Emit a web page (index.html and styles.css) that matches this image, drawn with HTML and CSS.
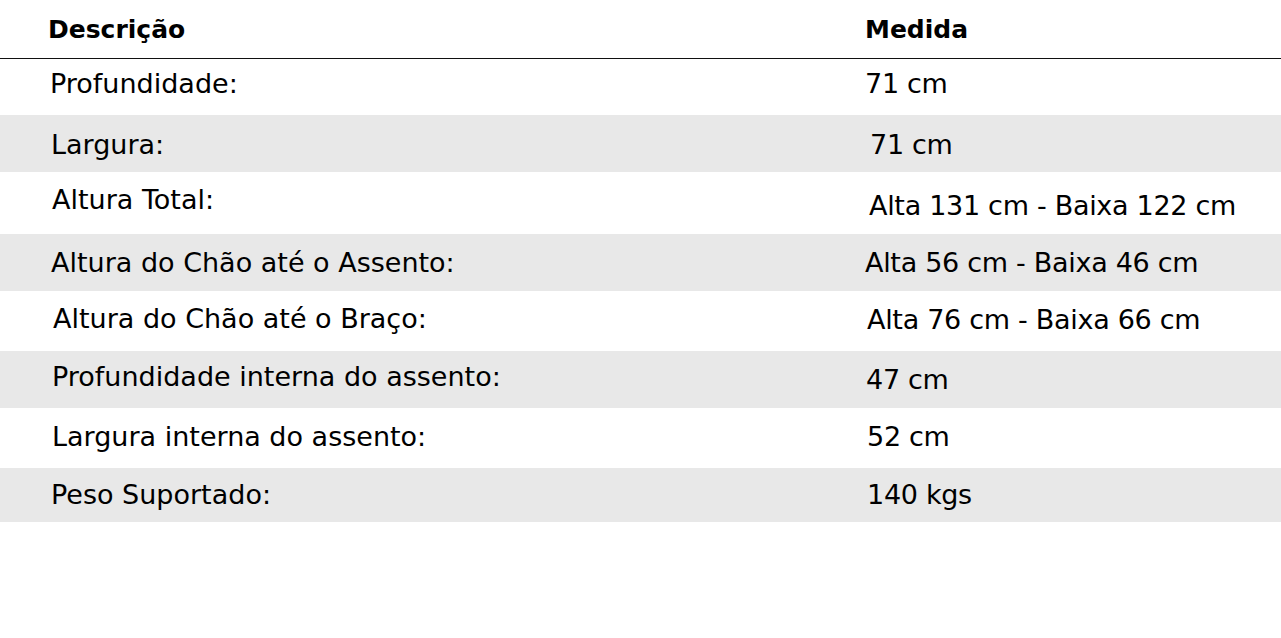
FILE: index.html
```html
<!DOCTYPE html>
<html lang="pt">
<head>
<meta charset="utf-8">
<title>Medidas</title>
<link rel="stylesheet" href="styles.css">
</head>
<body>
<div class="spec">
  <div class="row head">
    <div class="cell lab">Descrição</div>
    <div class="cell val">Medida</div>
  </div>
  <div class="row h56">
    <div class="cell lab pt9 dx0">Profundidade:</div>
    <div class="cell val pt9 dx0">71 cm</div>
  </div>
  <div class="row alt h57">
    <div class="cell lab pt14 dx1">Largura:</div>
    <div class="cell val pt14 dx5">71 cm</div>
  </div>
  <div class="row h62">
    <div class="cell lab pt12 dx2">Altura Total:</div>
    <div class="cell val pt18 dx4">Alta 131 cm - Baixa 122 cm</div>
  </div>
  <div class="row alt h57">
    <div class="cell lab pt13 dx1">Altura do Chão até o Assento:</div>
    <div class="cell val pt13 dx0">Alta 56 cm - Baixa 46 cm</div>
  </div>
  <div class="row h60">
    <div class="cell lab pt12 dx3">Altura do Chão até o Braço:</div>
    <div class="cell val pt13 dx2">Alta 76 cm - Baixa 66 cm</div>
  </div>
  <div class="row alt h57">
    <div class="cell lab pt10 dx2">Profundidade interna do assento:</div>
    <div class="cell val pt13 dx1">47 cm</div>
  </div>
  <div class="row h60">
    <div class="cell lab pt13 dx2">Largura interna do assento:</div>
    <div class="cell val pt13 dx2">52 cm</div>
  </div>
  <div class="row alt h54">
    <div class="cell lab pt11 dx1">Peso Suportado:</div>
    <div class="cell val pt11 dx2">140 kgs</div>
  </div>
</div>
</body>
</html>
```
FILE: styles.css
```css
html, body {
  margin: 0;
  padding: 0;
  background: #ffffff;
}

body {
  font-family: "DejaVu Sans", "Noto Sans", sans-serif;
  color: #000000;
}

.spec {
  display: flex;
  flex-direction: column;
}

.row {
  display: grid;
  grid-template-columns: 865px 1fr;
  align-items: start;
  font-size: 27px;
  line-height: 32px;
}

.row.head {
  height: 58px;
  border-bottom: 1px solid #111111;
  font-size: 25px;
  line-height: 30px;
  font-weight: 700;
}

.head .cell { padding-top: 15px; }
.head .lab { padding-left: 48px; }

.alt { background: #e8e8e8; }

.lab { padding-left: 50px; white-space: nowrap; }
.val { white-space: nowrap; letter-spacing: -0.3px; }
.head .val { letter-spacing: 0; }

.h54 { height: 54px; }
.h56 { height: 56px; }
.h57 { height: 57px; }
.h60 { height: 60px; }
.h62 { height: 62px; }

.pt9 { padding-top: 9px; }
.pt10 { padding-top: 10px; }
.pt11 { padding-top: 11px; }
.pt12 { padding-top: 12px; }
.pt13 { padding-top: 13px; }
.pt14 { padding-top: 14px; }
.pt18 { padding-top: 18px; }

.lab.dx0 { padding-left: 50px; }
.lab.dx1 { padding-left: 51px; }
.lab.dx2 { padding-left: 52px; }
.lab.dx3 { padding-left: 53px; }

.val.dx0 { padding-left: 0; }
.val.dx1 { padding-left: 1px; }
.val.dx2 { padding-left: 2px; }
.val.dx4 { padding-left: 4px; }
.val.dx5 { padding-left: 5px; }
```
